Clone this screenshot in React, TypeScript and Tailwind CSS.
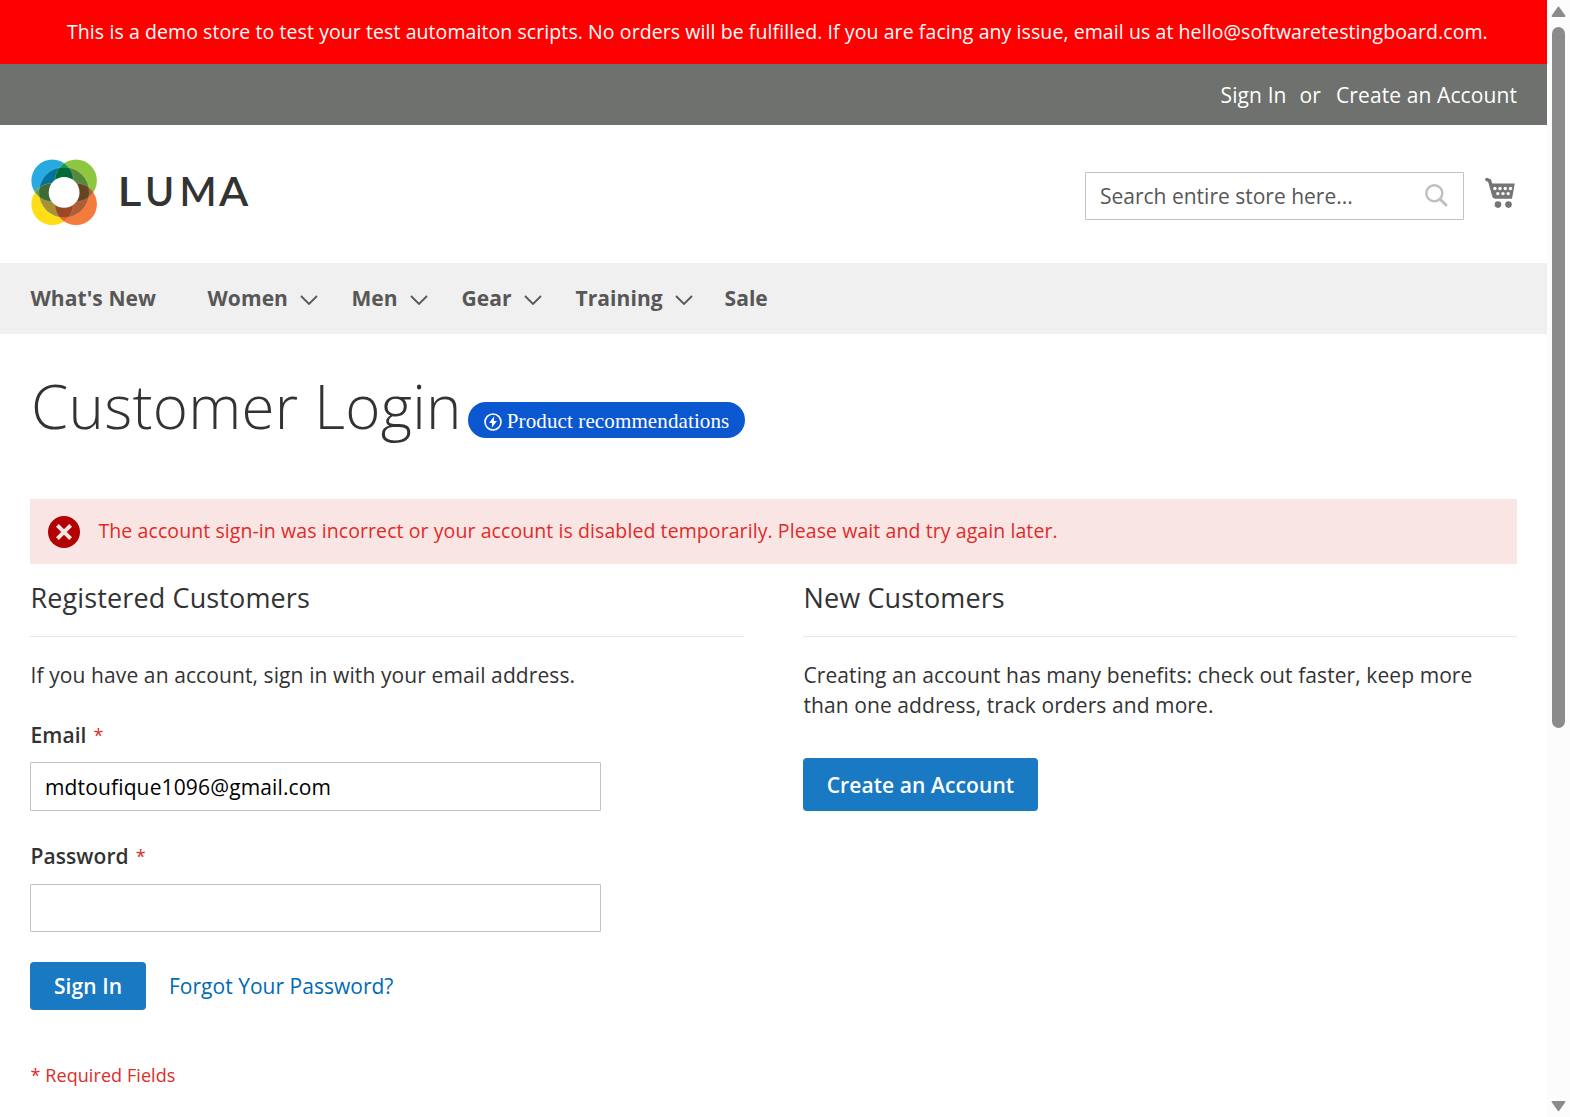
import React from "react";

const navItems = [
  { label: "What's New", width: "w-[177px]", menu: false },
  { label: "Women", width: "w-[144px]", menu: true },
  { label: "Men", width: "w-[110px]", menu: true },
  { label: "Gear", width: "w-[114px]", menu: true },
  { label: "Training", width: "w-[149px]", menu: true },
  { label: "Sale", width: "w-[60px]", menu: false },
];

function Logo() {
  return (
    <svg className="block h-[72px] w-[225px]" viewBox="0 0 225 72" aria-label="Luma">
      <defs>
        <clipPath id="tl"><circle cx="25" cy="24.5" r="21" /></clipPath>
        <clipPath id="tr"><circle cx="48.7" cy="24.5" r="21" /></clipPath>
        <clipPath id="bl"><circle cx="25" cy="48.2" r="21" /></clipPath>
        <clipPath id="ring"><circle cx="36.8" cy="36.4" r="25.2" /></clipPath>
      </defs>
      <g transform="translate(0.3 0)">
        <circle cx="25" cy="24.5" r="21" fill="#27a9e1" />
        <circle cx="48.7" cy="24.5" r="21" fill="#8dc63f" />
        <circle cx="25" cy="48.2" r="21" fill="#ffdd17" />
        <circle cx="48.7" cy="48.2" r="21" fill="#f47b3c" />
        <g clipPath="url(#tl)">
          <circle cx="48.7" cy="24.5" r="21" fill="#00a14f" />
          <circle cx="25" cy="48.2" r="21" fill="#5f9a48" />
        </g>
        <g clipPath="url(#tr)"><circle cx="48.7" cy="48.2" r="21" fill="#ad6132" /></g>
        <g clipPath="url(#bl)"><circle cx="48.7" cy="48.2" r="21" fill="#f05f2b" /></g>
        <g clipPath="url(#ring)">
          <circle cx="25" cy="24.5" r="21" fill="#04739c" />
          <circle cx="48.7" cy="24.5" r="21" fill="#56873c" />
          <circle cx="25" cy="48.2" r="21" fill="#a59235" />
          <circle cx="48.7" cy="48.2" r="21" fill="#b05c34" />
          <g clipPath="url(#tl)">
            <circle cx="25" cy="48.2" r="21" fill="#3c6b34" />
            <circle cx="48.7" cy="24.5" r="21" fill="#006b38" />
          </g>
          <g clipPath="url(#tr)"><circle cx="48.7" cy="48.2" r="21" fill="#63461f" /></g>
          <g clipPath="url(#bl)"><circle cx="48.7" cy="48.2" r="21" fill="#9c4825" /></g>
        </g>
        <g fill="none" stroke="#fff" strokeOpacity=".3" strokeWidth=".5">
          <circle cx="25" cy="24.5" r="21" />
          <circle cx="48.7" cy="24.5" r="21" />
          <circle cx="25" cy="48.2" r="21" />
          <circle cx="48.7" cy="48.2" r="21" />
          <circle cx="36.8" cy="36.4" r="25.2" />
        </g>
        <circle cx="36.8" cy="36.4" r="15.4" fill="#fff" />
      </g>
      <g fill="#333" fontFamily="Lato" fontWeight="600" fontSize="39.5">
        <text transform="translate(90.6 50.4) scale(1.17 1)">L</text>
        <text transform="translate(118 50.4)">U</text>
        <text transform="translate(152.6 50.4)">M</text>
        <text transform="translate(191.9 50.4) scale(1.08 1)">A</text>
      </g>
    </svg>
  );
}

function SearchIcon() {
  return (
    <svg className="h-6 w-6" viewBox="0 0 24 24" fill="none" stroke="#c0c0c0">
      <circle cx="9.3" cy="9.3" r="8" strokeWidth="2.5" />
      <path d="M15 15L21 21" strokeWidth="3" strokeLinecap="round" />
    </svg>
  );
}

function CartIcon() {
  return (
    <svg className="h-[32px] w-[31px]" viewBox="0 0 31 32" fill="#757575">
      <path d="M1.8 2.4L4.6 3.8L9 19.4" fill="none" stroke="#757575" strokeWidth="3.4" strokeLinecap="round" />
      <path d="M5.6 6.6H29.8L27 21.8H9.4Z" />
      <circle cx="13" cy="27.6" r="3.3" />
      <circle cx="23.5" cy="27.6" r="3.3" />
      <g fill="#fff">
        <circle cx="9.9" cy="11.5" r="1.7" /><circle cx="15" cy="11.5" r="1.7" />
        <circle cx="20.3" cy="11.5" r="1.7" /><circle cx="25.5" cy="11.5" r="1.7" />
        <circle cx="12.8" cy="16.6" r="1.7" /><circle cx="18" cy="16.6" r="1.7" />
        <circle cx="23.2" cy="16.6" r="1.7" />
      </g>
    </svg>
  );
}

function FieldLabel({ children }: { children: React.ReactNode }) {
  return (
    <label className="flex h-[30px] items-center pl-[0.5px] text-[21px] font-semibold leading-[30px] tracking-[0.08px] text-[#333]">
      {children}
      <span className="ml-[7px] text-[18px] font-normal text-[#e02b27]">*</span>
    </label>
  );
}

function BlockTitle({ children }: { children: React.ReactNode }) {
  return (
    <h2 className="h-[57px] border-b border-[#e8e8e8] pl-[0.5px] text-[27px] font-normal leading-[36px] tracking-[0.12px] text-[#333]">
      {children}
    </h2>
  );
}

function Scrollbar() {
  return (
    <aside className="flex h-full w-[23px] shrink-0 flex-col items-center bg-[#fcfcfc]">
      <svg className="mt-[6px] h-[12px] w-[15px]" viewBox="0 0 15 12">
        <path d="M7.5 1.5L13.5 10H1.5Z" fill="#8b8b8b" stroke="#8b8b8b" strokeWidth="1.8" strokeLinejoin="round" />
      </svg>
      <div className="mt-[9px] h-[701px] w-[13px] rounded-full bg-[#8b8b8b]" />
      <div className="flex-1" />
      <svg className="mb-[5px] h-[12px] w-[15px]" viewBox="0 0 15 12">
        <path d="M7.5 10.2L13.5 1.8H1.5Z" fill="#8b8b8b" stroke="#8b8b8b" strokeWidth="1.8" strokeLinejoin="round" />
      </svg>
    </aside>
  );
}

export default function App() {
  return (
    <div className="flex h-[1117px] w-[1570px] overflow-hidden bg-white font-['Open_Sans',sans-serif] text-[21px] text-[#333]">
      <div className="flex w-[1547px] shrink-0 flex-col">
        <div className="flex h-[64px] shrink-0 items-center whitespace-nowrap bg-[#ff0000] pl-[67px] text-[19.5px] tracking-[0.08px] text-white">
          This is a demo store to test your test automaiton scripts. No orders will be fulfilled. If you are facing any
          issue, email us at hello@softwaretestingboard.com.
        </div>
        <div className="flex h-[61px] shrink-0 items-center justify-end bg-[#6e716e] pr-[30px] pt-[2px] tracking-[0.1px] text-white">
          <span>Sign In</span>
          <span className="ml-[13px]">or</span>
          <span className="ml-[15px]">Create an Account</span>
        </div>
        <header className="flex h-[138px] shrink-0 pl-[27px]">
          <div className="mt-[31px]"><Logo /></div>
          <div className="ml-auto mt-[47px] flex h-[48px] w-[379px] items-center justify-between rounded-[1px] border border-[#c2c2c2] pl-[14px] pr-[14px] text-[#575757]">
            <span className="pt-[2px]">Search entire store here...</span>
            <SearchIcon />
          </div>
          <div className="ml-[21px] mr-[31px] mt-[52px]"><CartIcon /></div>
        </header>
        <nav className="flex h-[71px] shrink-0 items-center bg-[#f0f0f0] pl-[30.5px] font-bold tracking-[0.07px] text-[#575757]">
          {navItems.map((item) => (
            <div key={item.label} className={`flex shrink-0 items-center whitespace-nowrap ${item.width}`}>
              {item.label}
              {item.menu && (
                <svg className="ml-[12px] mt-[3px] h-[10px] w-[18px]" viewBox="0 0 18 10" fill="none" stroke="#575757" strokeWidth="1.8">
                  <path d="M1 1L9 9L17 1" />
                </svg>
              )}
            </div>
          ))}
        </nav>
        <main className="px-[30px]">
          <div className="mt-[38px] flex h-[70px]">
            <h1 className="whitespace-nowrap pl-px pt-px text-[60px] font-light leading-[66px] tracking-[0.28px]">Customer Login</h1>
            <div className="ml-[6px] mt-[30px] flex h-[36px] w-[277px] items-center whitespace-nowrap rounded-full bg-[#0b57d0] pl-[16px] font-['Liberation_Serif',serif] text-[21px] tracking-[0.12px] text-white">
              <svg className="mr-[5px] mt-[3px] h-[18px] w-[18px]" viewBox="0 0 18 18">
                <circle cx="9" cy="9" r="8" fill="none" stroke="#fff" strokeWidth="1.6" />
                <path d="M10.2 3.2L5.1 10H8.1L7.8 14.8L12.9 8H9.9Z" fill="#fff" />
              </svg>
              <span className="mt-[4px]">Product recommendations</span>
            </div>
          </div>
          <div className="mt-[57px] flex h-[65px] items-center bg-[#fae5e5] pl-[18px] text-[19.5px] tracking-[0.084px] text-[#e02b27]">
            <svg className="mr-[18.5px] mt-[1px] h-[32px] w-[32px]" viewBox="0 0 32 32">
              <circle cx="16" cy="16" r="16" fill="#b30000" />
              <path d="M9.4 9.4L22.6 22.6M22.6 9.4L9.4 22.6" stroke="#fae5e5" strokeWidth="4" />
            </svg>
            <span className="pb-px">
              The account sign-in was incorrect or your account is disabled temporarily. Please wait and try again later.
            </span>
          </div>
          <div className="mt-[16px] flex justify-between">
            <section className="w-[714px]">
              <BlockTitle>Registered Customers</BlockTitle>
              <p className="mt-[23px] pl-[0.5px] leading-[30px] tracking-[0.1px]">If you have an account, sign in with your email address.</p>
              <div className="mt-[30px]">
                <FieldLabel>Email</FieldLabel>
                <div className="mt-[12px] flex h-[49px] w-[571px] items-center rounded-[1px] border border-[#c2c2c2] pl-[14px] pt-[2px] tracking-[0.14px] text-black">
                  mdtoufique1096@gmail.com
                </div>
              </div>
              <div className="mt-[30px]">
                <FieldLabel>Password</FieldLabel>
                <div className="mt-[13px] h-[48px] w-[571px] rounded-[1px] border border-[#c2c2c2]" />
              </div>
              <div className="mt-[30px] flex items-center">
                <button className="h-[48px] w-[116px] rounded-[4px] bg-[#1979c3] pt-[2px] font-semibold tracking-[0.08px] text-white">Sign In</button>
                <a className="ml-[23px] pt-[2px] tracking-[0.02px] text-[#006bb4]">Forgot Your Password?</a>
              </div>
              <p className="mt-[52px] pl-[0.5px] text-[18px] leading-[26px] tracking-[0.08px] text-[#e02b27]">* Required Fields</p>
            </section>
            <section className="w-[714px]">
              <BlockTitle>New Customers</BlockTitle>
              <p className="mt-[23px] pl-[0.5px] leading-[30px] tracking-[0.08px]">
                Creating an account has many benefits: check out faster, keep more
                <br />
                than one address, track orders and more.
              </p>
              <button className="mt-[38px] h-[53px] w-[235px] rounded-[4px] bg-[#1979c3] pt-[2px] font-semibold tracking-[0.09px] text-white">
                Create an Account
              </button>
            </section>
          </div>
        </main>
      </div>
      <Scrollbar />
    </div>
  );
}
